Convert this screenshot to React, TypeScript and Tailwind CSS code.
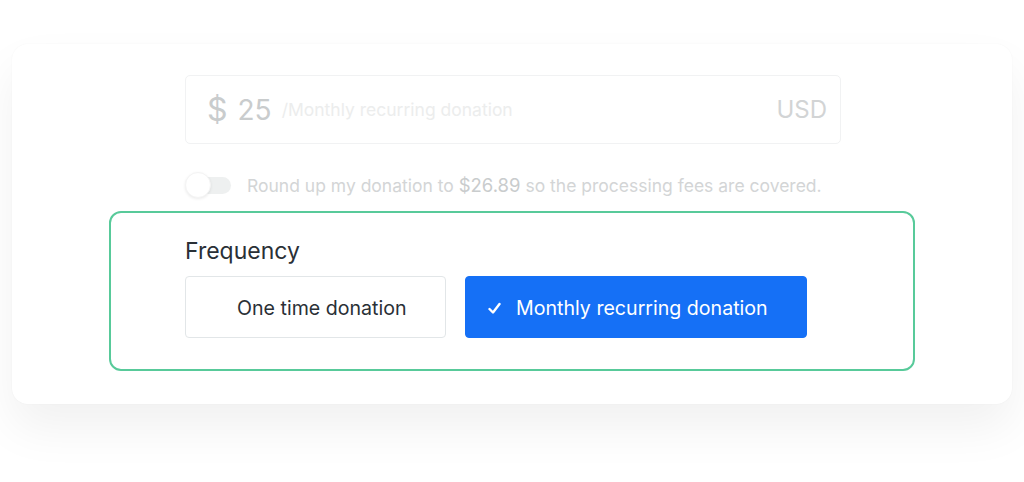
import { useState } from "react";

const font = "font-['Inter','Liberation_Sans',sans-serif]";

export default function App() {
  const [roundUp, setRoundUp] = useState(false);
  const [frequency, setFrequency] = useState<"once" | "monthly">("monthly");

  return (
    <div className={`${font} w-[1024px] h-[482px] bg-white overflow-hidden pt-[44px] px-[12px]`}>
      <div className="h-[360px] rounded-[16px] bg-white shadow-[0_24px_48px_rgba(0,0,0,0.06),0_0_2px_rgba(0,0,0,0.04)] pt-[31px]">
        {/* Faded amount section */}
        <div className="pl-[173px] w-[829px]">
          <div className="h-[69px] rounded-[5px] border border-[#f1f2f3] flex items-center px-[21px]">
            <span className="text-[32px] text-[#c9cccd] leading-none">$</span>
            <span className="text-[28px] text-[#c9cccd] leading-none ml-[10px]">25</span>
            <span className="text-[17.5px] text-[#eceded] ml-[10px] mt-[2px]">/Monthly recurring donation</span>
            <span className="ml-auto text-[24px] text-[#d2d4d5] mr-[-8px]">USD</span>
          </div>
          <div className="flex items-center mt-[28px] h-[26px]">
            <button onClick={() => setRoundUp(!roundUp)} className="relative w-[46px] h-[26px] shrink-0">
              <span className="absolute left-[10px] right-0 top-[5px] h-[17px] rounded-full bg-[#eef0f0]" />
              <span className="absolute left-0 top-0 size-[26px] rounded-full bg-white shadow-[0_1px_3px_rgba(0,0,0,0.08)] border border-[#f4f4f4]" />
            </button>
            <span className="ml-[16px] text-[17.5px] text-[#d3d5d6] mt-[1px]">
              Round up my donation to <span className="text-[18.5px] text-[#c9cccd]">$26.89</span> so the processing fees are covered.
            </span>
          </div>
        </div>

        {/* Frequency */}
        <div className="ml-[97px] mt-[13px] w-[806px] h-[160px] rounded-[12px] border-2 border-[#58ca9a] pl-[74px] pt-[23px]">
          <div className="text-[23px] text-[#2a3036] leading-[30px]">Frequency</div>
          <div className="flex gap-[19px] mt-[10px]">
            <button
              onClick={() => setFrequency("once")}
              className={`w-[261px] h-[62px] rounded-[4px] border text-[19.6px] flex items-center pl-[51px] pt-[3px] ${
                frequency === "once" ? "bg-[#1570f6] border-[#1570f6] text-white" : "bg-white border-[#e2e6e8] text-[#2a3036]"
              }`}
            >
              One time donation
            </button>
            <button
              onClick={() => setFrequency("monthly")}
              className={`w-[342px] h-[62px] rounded-[4px] border text-[19.6px] flex items-center pl-[22px] pt-[3px] ${
                frequency === "monthly" ? "bg-[#1570f6] border-[#1570f6] text-white" : "bg-white border-[#e2e6e8] text-[#2a3036]"
              }`}
            >
              {frequency === "monthly" && (
                <svg width="13" height="13" viewBox="0 0 13 13" className="mr-[15px]">
                  <path d="M1.5 7 L5 10.5 L11.5 2" fill="none" stroke="white" strokeWidth="2.4" strokeLinecap="round" strokeLinejoin="round" />
                </svg>
              )}
              Monthly recurring donation
            </button>
          </div>
        </div>
      </div>
    </div>
  );
}
